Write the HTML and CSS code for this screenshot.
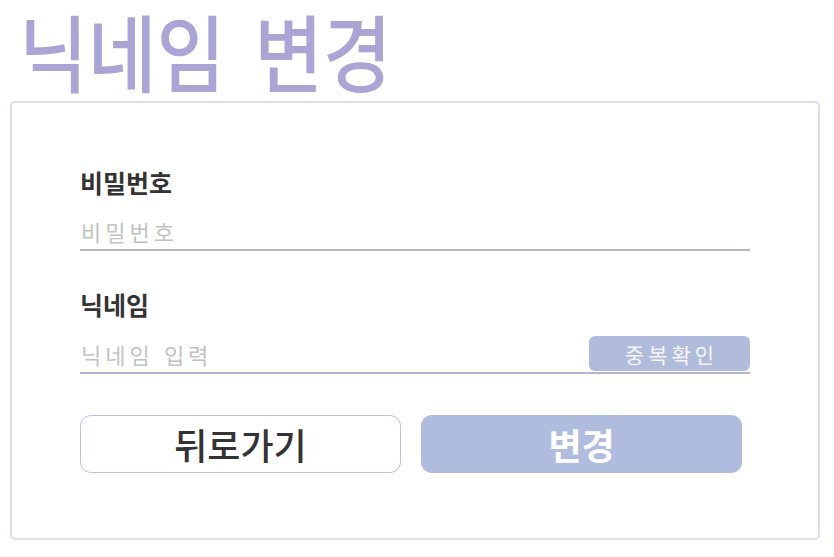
FILE: index.html
```html
<!DOCTYPE html>
<html lang="ko">
<head>
<meta charset="utf-8">
<title>닉네임 변경</title>
<link rel="stylesheet" href="styles.css">
</head>
<body>
  <header class="title-bar">
    <h1 class="title">닉네임 변경</h1>
  </header>
  <div class="card">
    <div class="field">
      <label class="label" for="pw">비밀번호</label>
      <div class="input-row">
        <input id="pw" class="input" type="password" placeholder="비밀번호">
      </div>
    </div>
    <div class="field field-second">
      <label class="label" for="nick">닉네임</label>
      <div class="input-row">
        <input id="nick" class="input" type="text" placeholder="닉네임 입력">
        <button class="dup-btn" type="button">중복확인</button>
      </div>
    </div>
    <div class="actions">
      <button class="btn btn-back" type="button">뒤로가기</button>
      <button class="btn btn-submit" type="button">변경</button>
    </div>
  </div>
</body>
</html>
```

FILE: styles.css
```css
* { box-sizing: border-box; }

html, body {
  margin: 0;
  padding: 0;
  background: #ffffff;
  font-family: "Noto Sans CJK KR", "Noto Sans", sans-serif;
}

body {
  width: 834px;
  height: 557px;
  overflow: hidden;
}

.title-bar {
  display: flex;
  align-items: flex-start;
  height: 101px;
  padding-left: 19px;
}

.title {
  margin: 0;
  font-size: 84px;
  line-height: 100px;
  font-weight: 500;
  word-spacing: 9px;
  color: #aba5d6;
  transform: scaleX(0.89);
  transform-origin: left center;
  white-space: nowrap;
}

.card {
  margin: 0 0 0 10px;
  width: 810px;
  height: 439px;
  border: 2px solid #dddbf0;
  border-radius: 5px;
  padding: 64px 68px 0 68px;
}

.field {
  display: flex;
  flex-direction: column;
  gap: 16px;
}

.field-second {
  margin-top: 38px;
  gap: 17px;
}

.label {
  font-size: 25px;
  line-height: 30px;
  font-weight: 700;
  color: #333333;
}

.input-row {
  display: flex;
  align-items: center;
  height: 38px;
  border-bottom: 2px solid #b6b4d0;
}

.input {
  flex: 1;
  min-width: 0;
  height: 36px;
  border: none;
  outline: none;
  padding: 0 0 0 1px;
  font-family: inherit;
  font-size: 22px;
  letter-spacing: 4px;
  color: #333;
  background: transparent;
}

.input::placeholder {
  color: #c2c2c2;
}

.dup-btn {
  width: 161px;
  height: 35px;
  margin-bottom: 1px;
  border: none;
  border-radius: 6px;
  background: #b1bcdd;
  color: #f4f5fb;
  font-family: inherit;
  font-size: 21px;
  letter-spacing: 4px;
  padding: 0 0 0 4px;
}

.actions {
  display: flex;
  gap: 20px;
  margin-top: 41px;
}

.btn {
  width: 321px;
  height: 58px;
  border-radius: 11px;
  font-family: inherit;
  font-size: 36px;
  padding: 0;
}

.btn-back {
  background: #ffffff;
  border: 1.5px solid #c0bedb;
  color: #333333;
  font-weight: 500;
}

.btn-submit {
  background: #b0bcde;
  border: none;
  color: #ffffff;
  font-weight: 700;
}
```
